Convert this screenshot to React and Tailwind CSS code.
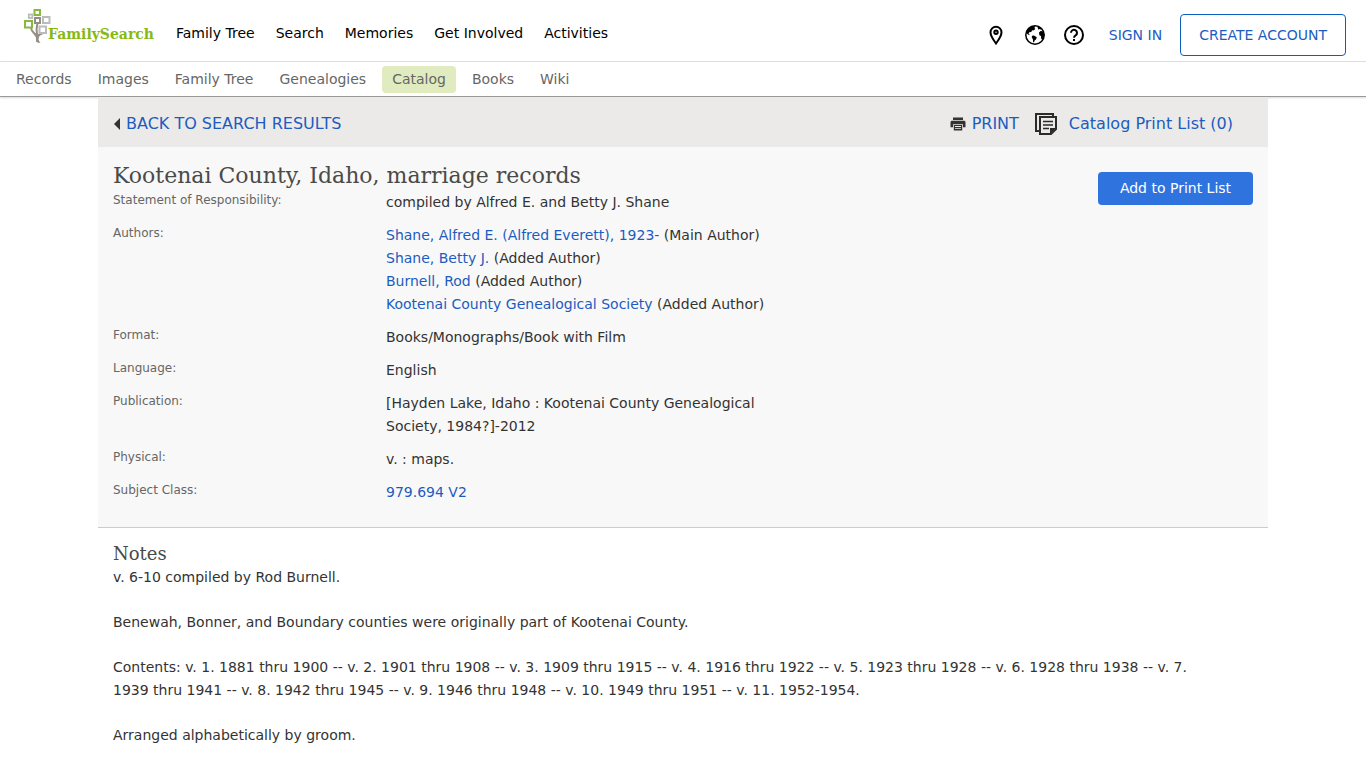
const MAIN_LINKS = ["Family Tree", "Search", "Memories", "Get Involved", "Activities"];

const SUB_LINKS = [
    "Records",
    "Images",
    "Family Tree",
    "Genealogies",
    "Catalog",
    "Books",
    "Wiki",
];

const AUTHORS = [
    { name: "Shane, Alfred E. (Alfred Everett), 1923-", role: "(Main Author)" },
    { name: "Shane, Betty J.", role: "(Added Author)" },
    { name: "Burnell, Rod", role: "(Added Author)" },
    { name: "Kootenai County Genealogical Society", role: "(Added Author)" },
];

const NOTES = [
    "v. 6-10 compiled by Rod Burnell.",
    "Benewah, Bonner, and Boundary counties were originally part of Kootenai County.",
    "Contents: v. 1. 1881 thru 1900 -- v. 2. 1901 thru 1908 -- v. 3. 1909 thru 1915 -- v. 4. 1916 thru 1922 -- v. 5. 1923 thru 1928 -- v. 6. 1928 thru 1938 -- v. 7. 1939 thru 1941 -- v. 8. 1942 thru 1945 -- v. 9. 1946 thru 1948 -- v. 10. 1949 thru 1951 -- v. 11. 1952-1954.",
    "Arranged alphabetically by groom.",
];

function Logo() {
    return (
        <a href="#home" className="flex items-start" aria-label="FamilySearch">
            <svg width="28" height="36" viewBox="0 0 28 36" fill="none">
                <path
                    d="M7 20c.5 4 4 5 5.500 8.500M13.500 15c-1 4-1.500 7-.5 12M18.500 25.500c-3 .5-4.500 2-5 5"
                    stroke="#958e85"
                    strokeWidth="2"
                />
                <path d="M10.500 25c1.800 3 1.500 6 1.500 8.500.8.800 2.500 1.500 4.500 1.300-2.500-2.300-2.500-5-1.300-8.300z" fill="#958e85" />
                <rect x="10.500" y="2" width="5.500" height="5" stroke="#87b940" strokeWidth="2" />
                <rect x="4.800" y="6.500" width="3.500" height="3.500" stroke="#b9bbbd" strokeWidth="1.800" />
                <rect x="11" y="10" width="5" height="5" stroke="#958e85" strokeWidth="2" />
                <rect x="19" y="9" width="6.500" height="6" stroke="#b9bbbd" strokeWidth="2" />
                <rect x="1" y="13" width="7" height="6.500" stroke="#87b940" strokeWidth="2" />
                <rect x="15.500" y="18.500" width="6.500" height="6.500" stroke="#b9bbbd" strokeWidth="2" />
            </svg>
            <span className="-ml-1 pt-[14px] font-['DejaVu_Serif',serif] text-[14px] leading-6 font-bold text-[#87b914]">
                FamilySearch
            </span>
        </a>
    );
}

function PinIcon() {
    return (
        <svg width="22" height="22" viewBox="0 0 22 22" fill="none" stroke="#000" strokeWidth="2">
            <path d="M11 19.500C8 15.500 5.500 11.500 5.500 8.300a5.500 5.500 0 0 1 11 0c0 3.200-2.500 7.200-5.500 11.200z" />
            <circle cx="11" cy="8.300" r="1.700" />
        </svg>
    );
}

function GlobeIcon() {
    return (
        <svg width="22" height="22" viewBox="0 0 22 22">
            <circle cx="11" cy="11" r="9.200" fill="#fff" stroke="#000" strokeWidth="1.500" />
            <path d="M2 8.500c.8-3 2.800-5.200 5.500-6.200l3.500-.3-.5 2 .8 1L9.500 6.500 8 6.300 7.300 8l-2 .3-.8 1.200 1.300 1.200-.8.3L2.500 9.500z" />
            <path d="M8 11.800l2-.3 2.800 1.700-.8 2.200-1.200.8-.8 2.300-.9-.6-.2-2.600L7.800 13.500z" />
            <path d="M13.500 3l1.300-.6 3.200 2.600-1.500.6-1.300-.6-.8.8z" />
            <path d="M15 8.500l1.600-1.500 2.400.3 1.200 2.200-.2 3.500-1.500 2.500-1.300-.7-.2-2.800-1.600-.8z" />
        </svg>
    );
}

function HelpIcon() {
    return (
        <svg width="22" height="22" viewBox="0 0 22 22" fill="none" stroke="#000" strokeWidth="2">
            <circle cx="11" cy="11" r="9" />
            <path d="M8 8.800a3 3 0 1 1 4.800 2.400c-1.200.9-1.800 1.300-1.800 2.600" />
            <path d="M11 15v2" />
        </svg>
    );
}

function PrinterIcon() {
    return (
        <svg width="16" height="14" viewBox="0 0 16 14" fill="#333">
            <path d="M3 .5h10v2.500H3z" />
            <path d="M1.500 3.800h13l1 1v5.500h-2.500V7.300H3v3H.5V4.800z" />
            <path d="M3.800 8h8.400v5.500H3.800zM5 9v.9h6V9zM5 11.200v.9h6v-.9z" fillRule="evenodd" />
        </svg>
    );
}

function ListIcon() {
    return (
        <svg width="22" height="22" viewBox="0 0 22 22" fill="none" stroke="#2b2b2b" strokeWidth="2">
            <path d="M18 3V1H1v17h3" />
            <path d="M5 4h16v12l-5 5H5z" />
            <path d="M8 8.500h10M8 12h10M8 15.500h6" strokeWidth="1.500" />
            <path d="M15 21v-6h6z" fill="#2b2b2b" stroke="none" />
        </svg>
    );
}

function Row({ label, children }) {
    return (
        <div className="flex">
            <dt className="w-[273px] shrink-0 text-[12px] leading-[18px] text-[#666]">{label}</dt>
            <dd className="max-w-[400px] text-[14px] leading-[23px] text-[#333]">{children}</dd>
        </div>
    );
}

export default function App() {
    return (
        <div className="min-h-screen bg-white font-['DejaVu_Sans',Verdana,sans-serif] text-[14px] text-[#333]">
            <header>
                <div className="flex h-[62px] items-start justify-between border-b border-[#e0e0e0] pr-5 pl-6">
                    <div className="flex items-start">
                        <div className="w-[152px] pt-2">
                            <Logo />
                        </div>
                        <nav className="flex gap-[21px] pt-[22px] leading-[22px] text-black">
                            {MAIN_LINKS.map((item) => (
                                <a key={item} href="#main">
                                    {item}
                                </a>
                            ))}
                        </nav>
                    </div>
                    <div className="flex items-center pt-[14px]">
                        <div className="flex gap-[17px]">
                            <button type="button" aria-label="Locations">
                                <PinIcon />
                            </button>
                            <button type="button" aria-label="Language">
                                <GlobeIcon />
                            </button>
                            <button type="button" aria-label="Help">
                                <HelpIcon />
                            </button>
                        </div>
                        <a href="#signin" className="ml-6 text-[#1c5cc0]">
                            SIGN IN
                        </a>
                        <a
                            href="#create"
                            className="ml-[18px] flex h-[42px] items-center rounded border border-[#0b5fba] px-[18px] text-[#1c5cc0]"
                        >
                            CREATE ACCOUNT
                        </a>
                    </div>
                </div>
                <nav className="flex h-[35px] items-center gap-[6px] border-b border-[#999] px-[6px] text-[#666] shadow-[0_1px_2px_rgba(0,0,0,0.15)]">
                    {SUB_LINKS.map((item) => (
                        <a
                            key={item}
                            href="#section"
                            className={`rounded px-[10px] py-[3px] leading-[21px] ${item === "Catalog" ? "bg-[#e0ecbf]" : ""}`}
                        >
                            {item}
                        </a>
                    ))}
                </nav>
            </header>

            <main className="mx-auto max-w-[1170px]">
                <div className="flex h-[50px] items-center justify-between bg-[#ebeae9] pt-[3px] pr-[35px] pl-[15px] text-[16px] text-[#1c5cc0]">
                    <a href="#results" className="flex items-center gap-[6px]">
                        <svg width="7" height="12" viewBox="0 0 7 12" fill="#333">
                            <path d="M7 0v12L1 6z" />
                        </svg>
                        BACK TO SEARCH RESULTS
                    </a>
                    <div className="flex items-center gap-4">
                        <a href="#print" className="flex items-center gap-[6px]">
                            <PrinterIcon />
                            PRINT
                        </a>
                        <a href="#list" className="flex items-center gap-3">
                            <ListIcon />
                            Catalog Print List (0)
                        </a>
                    </div>
                </div>

                <section className="flex items-start justify-between border-b border-[#ccc] bg-[#f8f8f8] px-[15px] pb-[23px]">
                    <div>
                        <h1 className="pt-[15px] pb-px font-['DejaVu_Serif',serif] text-[22px] leading-7 text-[#4a4a48]">
                            Kootenai County, Idaho, marriage records
                        </h1>
                        <dl className="flex flex-col gap-[10px]">
                            <Row label="Statement of Responsibility:">
                                compiled by Alfred E. and Betty J. Shane
                            </Row>
                            <Row label="Authors:">
                                {AUTHORS.map((a) => (
                                    <div key={a.name}>
                                        <a href="#author" className="text-[#1c5cc0]">
                                            {a.name}
                                        </a>{" "}
                                        {a.role}
                                    </div>
                                ))}
                            </Row>
                            <Row label="Format:">Books/Monographs/Book with Film</Row>
                            <Row label="Language:">English</Row>
                            <Row label="Publication:">
                                [Hayden Lake, Idaho : Kootenai County Genealogical Society, 1984?]-2012
                            </Row>
                            <Row label="Physical:">v. : maps.</Row>
                            <Row label="Subject Class:">
                                <a href="#class" className="text-[#1c5cc0]">
                                    979.694 V2
                                </a>
                            </Row>
                        </dl>
                    </div>
                    <button
                        type="button"
                        className="mt-[25px] h-[33px] w-[155px] rounded bg-[#2f73de] text-white"
                    >
                        Add to Print List
                    </button>
                </section>

                <section className="pt-[14px] pr-12 pl-[15px]">
                    <h2 className="font-['DejaVu_Serif',serif] text-[18px] leading-6 text-[#4a4a48]">
                        Notes
                    </h2>
                    <div className="flex flex-col gap-[22px] leading-[23px]">
                        {NOTES.map((note) => (
                            <p key={note}>{note}</p>
                        ))}
                    </div>
                </section>
            </main>
        </div>
    );
}
